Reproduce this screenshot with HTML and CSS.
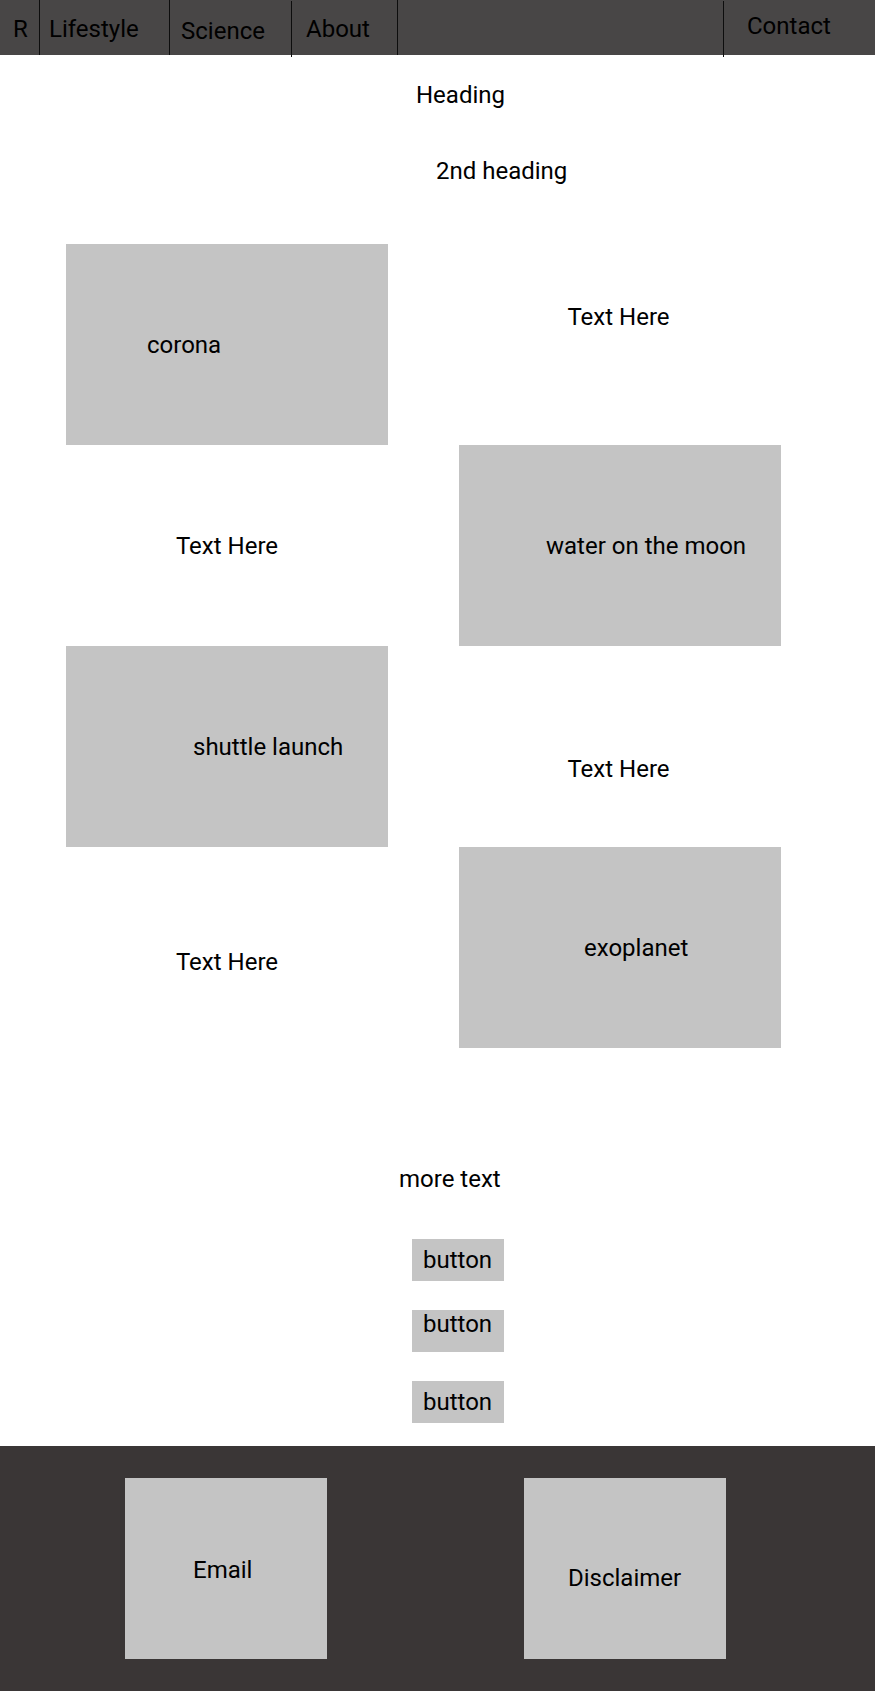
FILE: index.html
```html
<!DOCTYPE html>
<html lang="en">
<head>
<meta charset="utf-8">
<title>Page</title>
<link rel="stylesheet" href="styles.css">
</head>
<body>
<div class="page">
  <nav class="nav">
    <div class="nav-item nav-r">R</div>
    <div class="nav-item nav-lifestyle">Lifestyle</div>
    <div class="nav-item nav-science">Science</div>
    <div class="nav-item nav-about">About</div>
    <div class="nav-item nav-spacer"></div>
    <div class="nav-item nav-contact">Contact</div>
  </nav>
  <main>
    <h1 class="heading">Heading</h1>
    <h2 class="subheading">2nd heading</h2>
    <section class="grid">
      <div class="card"><span class="label label-corona">corona</span></div>
      <div class="text-cell text-right cell-up">Text Here</div>
      <div class="text-cell">Text Here</div>
      <div class="card"><span class="label label-water">water on the moon</span></div>
      <div class="card"><span class="label label-shuttle">shuttle launch</span></div>
      <div class="text-cell text-right cell-down">Text Here</div>
      <div class="text-cell cell-down-sm">Text Here</div>
      <div class="card"><span class="label label-exo">exoplanet</span></div>
    </section>
    <p class="more">more text</p>
    <div class="buttons">
      <div class="btn btn-1">button</div>
      <div class="btn btn-2">button</div>
      <div class="btn btn-3">button</div>
    </div>
  </main>
  <footer class="footer">
    <div class="fbox fbox-email">Email</div>
    <div class="fbox fbox-disclaimer">Disclaimer</div>
  </footer>
</div>
</body>
</html>
```

FILE: styles.css
```css
html, body {
  margin: 0;
  padding: 0;
  background: #ffffff;
}

body {
  font-family: Roboto, "Liberation Sans", Arial, sans-serif;
  font-size: 24px;
  line-height: 28px;
  color: #000000;
}

.page {
  width: 875px;
}

/* NAV */
.nav {
  display: flex;
  height: 55px;
  background: #484646;
}

.nav-item {
  box-sizing: border-box;
  height: 55px;
  border-right: 1px solid #0d0d0d;
  padding-top: 15px;
  white-space: nowrap;
}

.nav-r {
  width: 40px;
  padding-left: 13px;
}

.nav-lifestyle {
  width: 130px;
  padding-left: 9px;
}

.nav-science {
  width: 122px;
  padding-left: 11px;
  align-self: flex-start;
  margin-top: 1px;
  height: 56px;
  padding-top: 16px;
}

.nav-about {
  width: 106px;
  padding-left: 14px;
}

.nav-spacer {
  flex: 1;
  align-self: flex-start;
  margin-top: 1px;
  height: 56px;
}

.nav-contact {
  width: 151px;
  border-right: 0;
  padding-left: 23px;
  padding-top: 12px;
}

/* HEADINGS */
.heading {
  margin: 26px 0 0;
  padding-left: 416px;
  font-size: 24px;
  font-weight: 400;
  line-height: 28px;
}

.subheading {
  margin: 48px 0 0;
  padding-left: 436px;
  font-size: 24px;
  font-weight: 400;
  line-height: 28px;
}

/* GRID */
.grid {
  margin-top: 59px;
  padding-left: 66px;
  display: grid;
  grid-template-columns: 322px 322px;
  column-gap: 71px;
  grid-auto-rows: 201px;
}

.card {
  background: #c4c4c4;
  display: flex;
  align-items: center;
}

.label-corona { padding-left: 81px; }
.label-water { padding-left: 87px; }
.label-shuttle { padding-left: 127px; }
.label-exo { padding-left: 125px; }

.text-cell {
  box-sizing: border-box;
  display: flex;
  align-items: center;
  justify-content: center;
}

.text-right { padding-right: 3px; }
.cell-up { padding-bottom: 55px; }
.cell-down { padding-top: 45px; }
.cell-down-sm { padding-top: 28px; }

/* MORE + BUTTONS */
.more {
  margin: 117px 0 0;
  padding-left: 399px;
}

.buttons {
  margin-top: 46px;
  padding-left: 412px;
  display: flex;
  flex-direction: column;
  gap: 29px;
}

.btn {
  box-sizing: border-box;
  width: 92px;
  height: 42px;
  background: #c4c4c4;
  padding-left: 11px;
}

.btn-1 { padding-top: 7px; }
.btn-2 { padding-top: 0; }
.btn-3 { padding-top: 7px; }

/* FOOTER */
.footer {
  box-sizing: border-box;
  margin-top: 23px;
  height: 245px;
  background: #3a3636;
  display: flex;
  padding-top: 32px;
  padding-left: 125px;
  gap: 197px;
  align-items: flex-start;
}

.fbox {
  box-sizing: border-box;
  width: 202px;
  height: 181px;
  background: #c4c4c4;
  display: flex;
  align-items: center;
}

.fbox-email {
  padding-left: 68px;
  padding-top: 3px;
}

.fbox-disclaimer {
  padding-left: 44px;
  padding-top: 18px;
}
```
